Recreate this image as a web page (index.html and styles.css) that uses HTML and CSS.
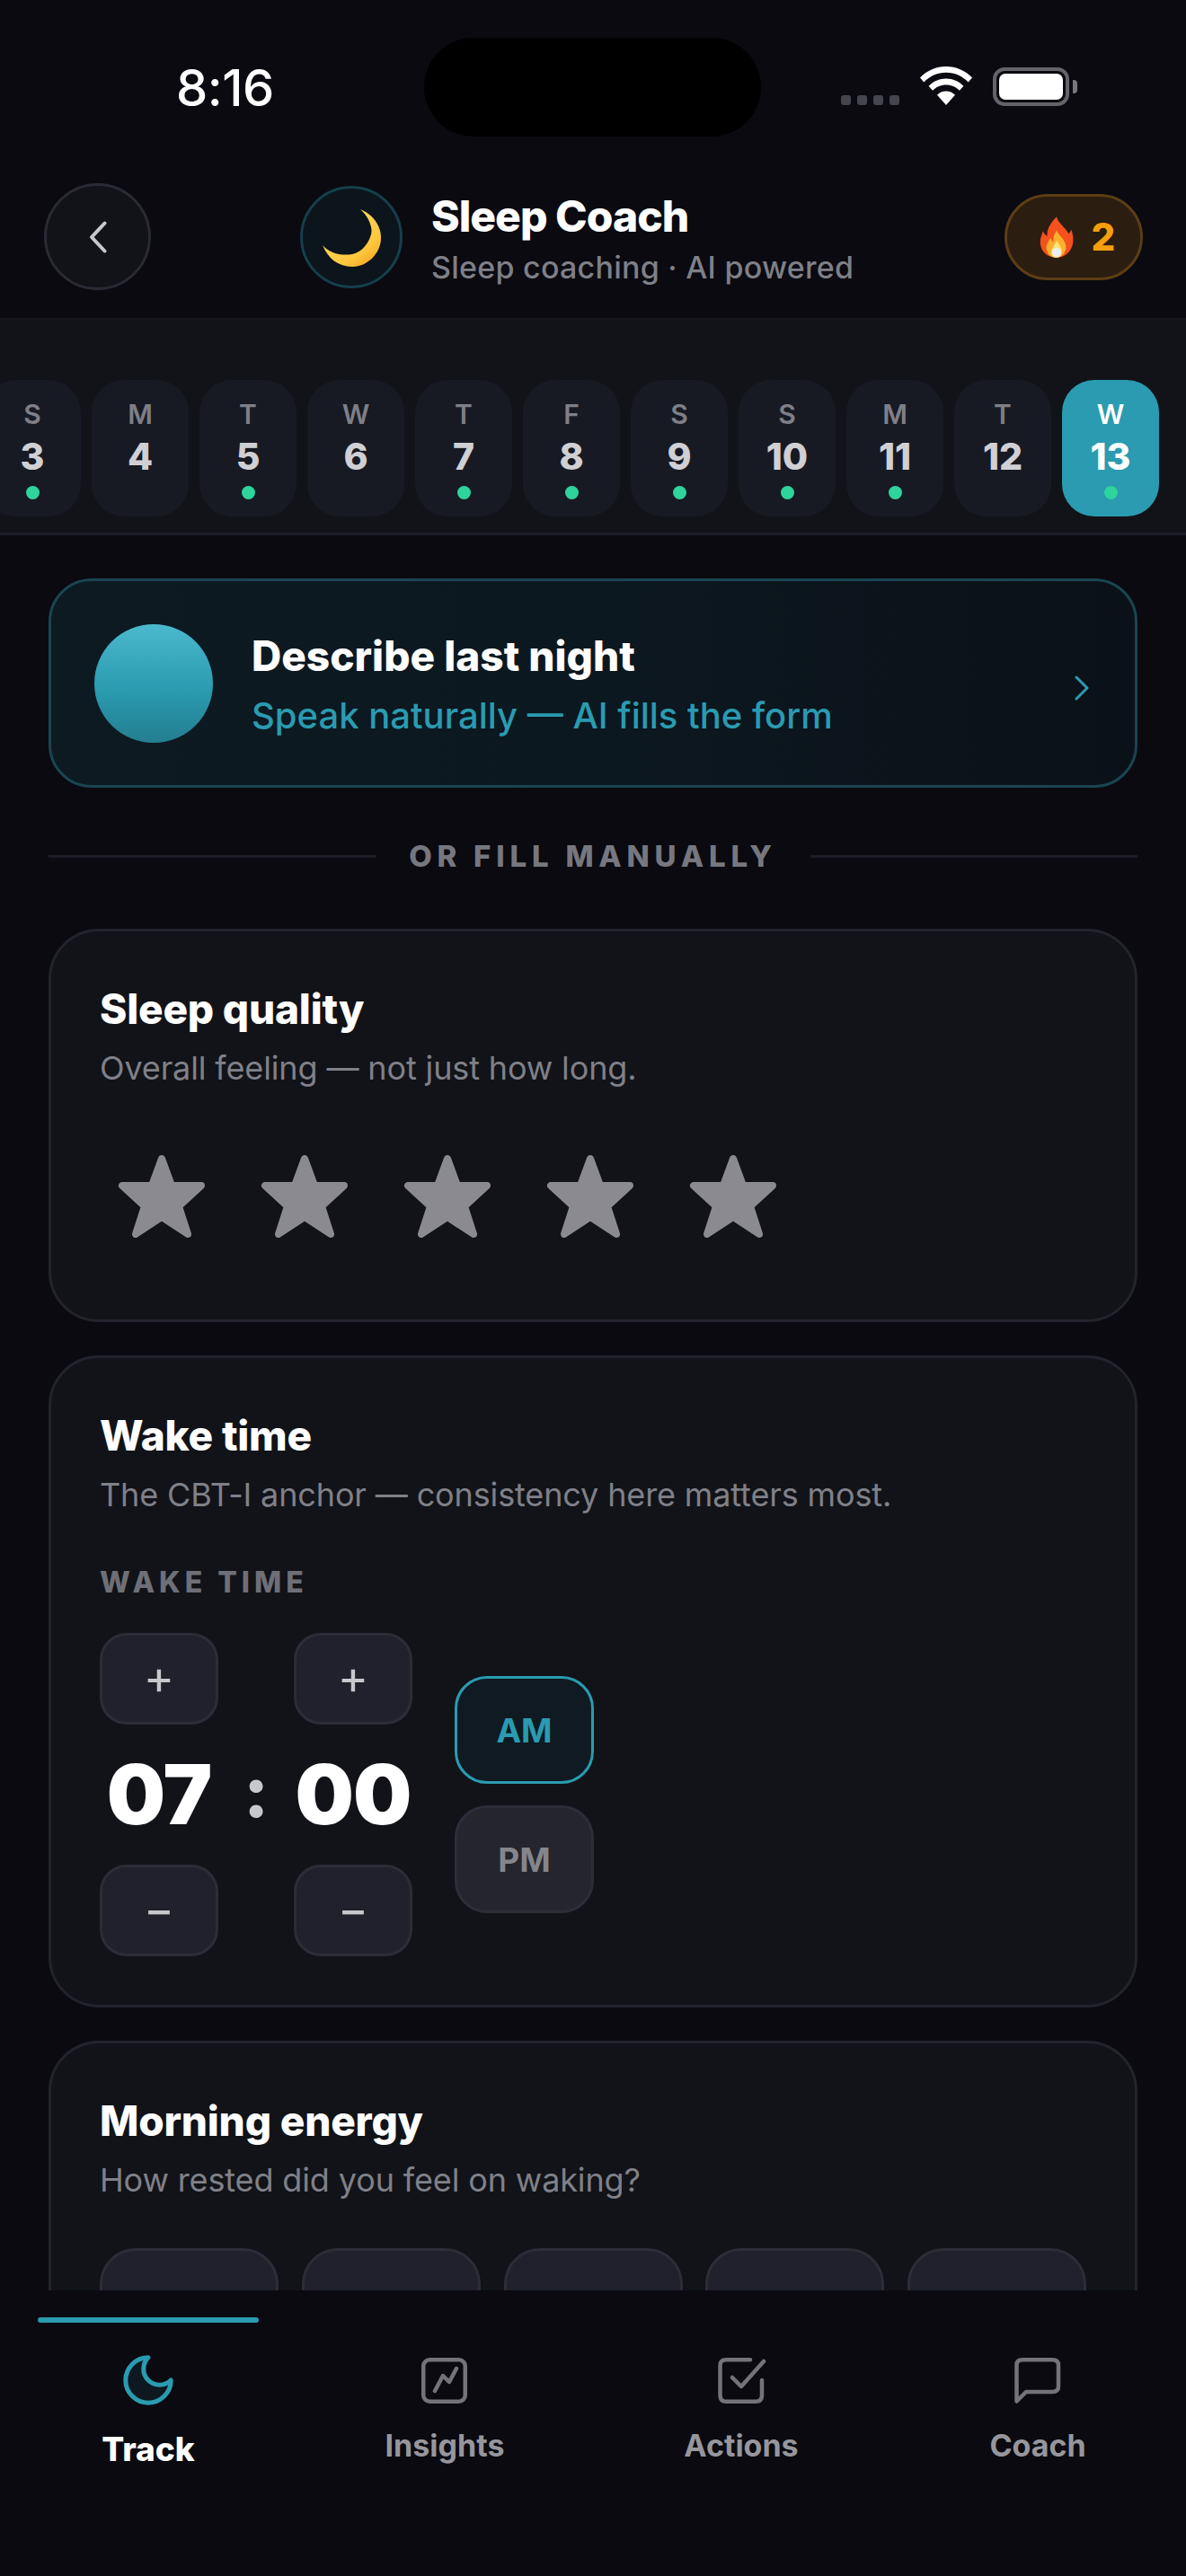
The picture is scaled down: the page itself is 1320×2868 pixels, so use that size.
FILE: index.html
```html
<!DOCTYPE html>
<html lang="en">
<head>
<meta charset="utf-8">
<title>Sleep Coach</title>
<link rel="stylesheet" href="styles.css">
</head>
<body>
<div class="screen">
  <div class="status">
    <span class="clock">8:16</span>
    <div class="island"></div>
    <div class="status-icons">
      <div class="signal"><i></i><i></i><i></i><i></i></div>
      <svg class="wifi" width="58" height="43" viewBox="0 0 58 43"><path fill="#fff" d="M29 0C18 0 8 4.300 0 12.500L4.300 17.500C11 10.500 19.500 6.700 29 6.700S47 10.500 53.700 17.500L58 12.500C50 4.300 40 0 29 0Z"/><path fill="#fff" d="M29 13.500C21.500 13.500 14.700 16.500 9.600 21.800L14 26.800C17.800 22.800 23 20.400 29 20.400S40.200 22.800 44 26.800L48.400 21.800C43.300 16.500 36.500 13.500 29 13.500Z"/><path fill="#fff" d="M29 27.500C25 27.500 21.600 29 19 31.700L29 43L39 31.700C36.400 29 33 27.500 29 27.500Z"/></svg>
      <div class="battery"><div class="battery-fill"></div></div>
    </div>
  </div>

  <header class="top">
    <button class="back"><svg width="20" height="36" viewBox="0 0 20 36"><path d="M17.500 2.500 3 18l14.500 15.500" fill="none" stroke="#c8c8cc" stroke-width="4" stroke-linecap="round" stroke-linejoin="round"/></svg></button>
    <div class="brand">
      <div class="avatar"><svg width="65" height="65" viewBox="0 0 65 65"><defs><linearGradient id="moon" x1="0.2" y1="0.2" x2="0.8" y2="1"><stop offset="0" stop-color="#ffd95e"/><stop offset="0.7" stop-color="#fdc73e"/><stop offset="1" stop-color="#f6a623"/></linearGradient></defs><path fill="url(#moon)" d="M42 1C52 10 56 22 54 29 50 43 40 50 33 51 20 53 8 50 0 41 6 56 18 65 33 65 50 65 65 50 65 33 65 18 55 6 42 1Z"/></svg></div>
      <div class="brand-text">
        <div class="brand-title">Sleep Coach</div>
        <div class="brand-sub">Sleep coaching · AI powered</div>
      </div>
    </div>
    <div class="streak">
      <svg class="flame" width="38" height="48" viewBox="0 0 40 48"><path fill="#f4511e" d="M20 0C22 8 30 12 34 20 37 17 37 15 37 15 40 22 40 30 38 35 35 43 28 48 20 48 10 48 2 42 1 32 0 26 3 21 4 17 5 20 7 22 9 23 8 15 13 7 20 0Z"/><path fill="#fbb02d" d="M20 16C22 22 30 26 31 35 31 42 26 48 20 48 13 48 8 43 8 36 9 30 11 28 13 25 14 28 15 29 16 30 16 25 17 20 20 16Z"/><path fill="#ffe27a" d="M20 28C22 32 26 35 26 40 26 45 23 48 20 48 16 48 13 45 14 40 15 36 18 33 20 28Z"/><circle cx="20" cy="42" r="5.500" fill="#eceff1"/></svg>
      <span class="streak-num">2</span>
    </div>
  </header>

  <div class="strip">
    <div class="day"><span class="dow">S</span><span class="num">3</span><i class="dot"></i></div>
    <div class="day"><span class="dow">M</span><span class="num">4</span></div>
    <div class="day"><span class="dow">T</span><span class="num">5</span><i class="dot"></i></div>
    <div class="day"><span class="dow">W</span><span class="num">6</span></div>
    <div class="day"><span class="dow">T</span><span class="num">7</span><i class="dot"></i></div>
    <div class="day"><span class="dow">F</span><span class="num">8</span><i class="dot"></i></div>
    <div class="day"><span class="dow">S</span><span class="num">9</span><i class="dot"></i></div>
    <div class="day"><span class="dow">S</span><span class="num">10</span><i class="dot"></i></div>
    <div class="day"><span class="dow">M</span><span class="num">11</span><i class="dot"></i></div>
    <div class="day"><span class="dow">T</span><span class="num">12</span></div>
    <div class="day active"><span class="dow">W</span><span class="num">13</span><i class="dot"></i></div>
  </div>

  <main class="content">
    <section class="voice">
      <div class="orb"></div>
      <div class="voice-text">
        <div class="voice-title">Describe last night</div>
        <div class="voice-sub">Speak naturally — AI fills the form</div>
      </div>
      <svg class="voice-chev" width="18" height="28" viewBox="0 0 18 28"><path d="M3 2l12 12L3 26" fill="none" stroke="#2a9bb0" stroke-width="3" stroke-linecap="round" stroke-linejoin="round"/></svg>
    </section>

    <div class="divider"><span class="rule"></span><span class="divider-text">OR FILL MANUALLY</span><span class="rule"></span></div>

    <section class="card quality">
      <h2>Sleep quality</h2>
      <p>Overall feeling — not just how long.</p>
      <div class="stars">
        <svg class="star" viewBox="0 0 98 93"><polygon points="49,5 60,35 93,35 68,58 78,89 49,70 20,89 30,58 5,35 38,35"/></svg>
        <svg class="star" viewBox="0 0 98 93"><polygon points="49,5 60,35 93,35 68,58 78,89 49,70 20,89 30,58 5,35 38,35"/></svg>
        <svg class="star" viewBox="0 0 98 93"><polygon points="49,5 60,35 93,35 68,58 78,89 49,70 20,89 30,58 5,35 38,35"/></svg>
        <svg class="star" viewBox="0 0 98 93"><polygon points="49,5 60,35 93,35 68,58 78,89 49,70 20,89 30,58 5,35 38,35"/></svg>
        <svg class="star" viewBox="0 0 98 93"><polygon points="49,5 60,35 93,35 68,58 78,89 49,70 20,89 30,58 5,35 38,35"/></svg>
      </div>
    </section>

    <section class="card wake">
      <h2>Wake time</h2>
      <p>The CBT-I anchor — consistency here matters most.</p>
      <div class="label">WAKE TIME</div>
      <div class="time-row">
        <div class="stepper">
          <button class="step">+</button>
          <div class="digits">07</div>
          <button class="step">−</button>
        </div>
        <div class="colon">:</div>
        <div class="stepper">
          <button class="step">+</button>
          <div class="digits">00</div>
          <button class="step">−</button>
        </div>
        <div class="ampm">
          <button class="mer on">AM</button>
          <button class="mer">PM</button>
        </div>
      </div>
    </section>

    <section class="card morning">
      <h2>Morning energy</h2>
      <p>How rested did you feel on waking?</p>
      <div class="chips"><div class="chip"></div><div class="chip"></div><div class="chip"></div><div class="chip"></div><div class="chip"></div></div>
    </section>
  </main>

  <nav class="tabs">
    <div class="tab tab-on">
      <span class="tab-bar"></span>
      <svg class="tab-icon" width="56" height="56" viewBox="2 2 20 20"><path d="M12 3a6 6 0 0 0 9 9 9 9 0 1 1-9-9Z" fill="#0d1820" stroke="#2a9bb0" stroke-width="1.800" stroke-linejoin="round"/></svg>
      <span class="tab-label">Track</span>
    </div>
    <div class="tab">
      <svg class="tab-icon" width="56" height="56" viewBox="0 0 56 56"><rect x="4.250" y="5.250" width="46.500" height="46.500" rx="7" fill="none" stroke="#737379" stroke-width="4.500"/><path d="M17 40l9-17 7 7 8-15" fill="none" stroke="#737379" stroke-width="4.500" stroke-linecap="round" stroke-linejoin="round"/></svg>
      <span class="tab-label">Insights</span>
    </div>
    <div class="tab">
      <svg class="tab-icon" width="56" height="56" viewBox="0 0 56 56"><path d="M38 5.250H11Q4.500 5.250 4.500 11.700V45Q4.500 51.700 11 51.700H44Q51 51.700 51 45V28" fill="none" stroke="#737379" stroke-width="4.500" stroke-linecap="round"/><path d="M18 25l10 10L53 7" fill="none" stroke="#737379" stroke-width="4.500" stroke-linecap="round" stroke-linejoin="round"/></svg>
      <span class="tab-label">Actions</span>
    </div>
    <div class="tab">
      <svg class="tab-icon" width="56" height="56" viewBox="0 0 56 56"><path d="M4.500 51.500V11Q4.500 5.250 11 5.250H44Q51 5.250 51 11V35Q51 41 44 41H15Z" fill="none" stroke="#737379" stroke-width="4.500" stroke-linejoin="round"/></svg>
      <span class="tab-label">Coach</span>
    </div>
  </nav>
</div>
</body>
</html>
```

FILE: styles.css
```css
* { box-sizing: border-box; margin: 0; padding: 0; }
html, body { background: #0a0a10; }
body { font-family: Inter, "Liberation Sans", sans-serif; color: #fff; }
button { font-family: inherit; background: none; border: 0; color: inherit; }
i { display: block; }

.screen { width: 1320px; height: 2868px; display: flex; flex-direction: column; overflow: hidden; position: relative; background: #0a0a10; }

.status { height: 204px; flex: none; position: relative; display: flex; justify-content: space-between; padding: 0 130px 0 196px; }
.clock { font-size: 56px; font-weight: 500; line-height: 66px; margin-top: 65px; letter-spacing: -0.5px; }
.island { position: absolute; left: 472px; top: 42px; width: 375px; height: 110px; border-radius: 55px; background: #000; }
.status-icons { display: flex; align-items: flex-end; height: 118px; }
.signal { display: flex; gap: 7px; margin-right: 23px; margin-bottom: 1px; }
.signal i { width: 11px; height: 11px; border-radius: 3px; background: #45454d; }
.wifi { display: block; margin-right: 23px; margin-bottom: 1px; }
.battery { width: 85px; height: 43px; border: 4px solid #636369; border-radius: 13px; padding: 3px; position: relative; }
.battery::after { content: ""; position: absolute; right: -13px; top: 10px; width: 5px; height: 15px; border-radius: 0 4px 4px 0; background: #77777d; }
.battery-fill { width: 100%; height: 100%; background: #fff; border-radius: 7px; }

.top { height: 150px; flex: none; position: relative; display: flex; align-items: flex-start; justify-content: space-between; padding: 0 48px 0 49px; }
.back { width: 119px; height: 119px; border-radius: 50%; background: #111318; border: 3px solid #2a2a35; display: flex; align-items: center; justify-content: center; flex: none; }
.brand { display: flex; align-items: center; gap: 32px; margin-top: 3px; margin-left: 166px; flex: 1; }
.avatar { width: 114px; height: 114px; border-radius: 50%; background: #0c141c; border: 3px solid #163f4c; display: flex; align-items: center; justify-content: center; flex: none; }
.brand-text { display: flex; flex-direction: column; gap: 8px; margin-top: 2px; }
.brand-title { font-size: 48px; font-weight: 800; line-height: 58px; letter-spacing: -1px; }
.brand-sub { font-size: 34px; font-weight: 500; line-height: 40px; color: #7f7f87; letter-spacing: 0.25px; }
.streak { width: 154px; height: 96px; border-radius: 48px; background: #2b1d10; border: 3px solid #5c3d14; margin-top: 12px; display: flex; align-items: center; justify-content: center; gap: 20px; padding-left: 8px; flex: none; }
.flame { display: block; }
.streak-num { font-size: 42px; font-weight: 800; color: #f59e0b; line-height: 1; }

.strip { height: 242px; flex: none; background: #111318; border-top: 3px solid #14161b; border-bottom: 3px solid #1c1c28; display: flex; gap: 12px; padding: 66px 30px 0 0; overflow: hidden; justify-content: flex-end; }
.day { width: 108px; height: 152px; flex: none; border-radius: 36px; background: #181a23; display: flex; flex-direction: column; align-items: center; padding-top: 21px; }
.dow { font-size: 30px; font-weight: 600; line-height: 34px; color: #7f7f87; }
.num { font-size: 41px; font-weight: 800; line-height: 48px; color: #d0d0d4; margin-top: 6px; }
.dot { width: 15px; height: 15px; border-radius: 50%; background: #2fd39c; margin-top: 9px; }
.day.active { background: #2a9bb0; }
.day.active .dow, .day.active .num { color: #fff; }

.content { padding: 48px 54px 0 54px; flex: 1; min-height: 0; overflow: hidden; display: flex; flex-direction: column; }
.voice { flex: none; height: 233px; border-radius: 48px; border: 3px solid #1a4552; background: linear-gradient(90deg, #0d1a22, #0c1820 50%, #0b1118); display: flex; align-items: center; padding: 0 50px 0 48px; }
.orb { width: 132px; height: 132px; border-radius: 50%; background: linear-gradient(180deg, #4bb9cd, #2a9bb0 55%, #247e90); flex: none; }
.voice-text { margin-left: 43px; flex: 1; display: flex; flex-direction: column; gap: 16px; }
.voice-title { font-size: 46px; font-weight: 800; line-height: 56px; }
.voice-sub { font-size: 40px; font-weight: 500; line-height: 46px; color: #2a9bb0; }
.voice-chev { margin-top: 10px; flex: none; }

.divider { flex: none; height: 30px; margin-top: 61px; display: flex; align-items: center; justify-content: space-between; }
.rule { width: 364px; height: 3px; background: #1a1c26; }
.divider-text { font-size: 33px; font-weight: 800; letter-spacing: 5.8px; color: #77777f; white-space: nowrap; }

.card { flex: none; border: 3px solid #22232d; border-radius: 56px; background: #111318; padding: 59px 54px 0; margin-top: 37px; }
.quality { margin-top: 66px; height: 438px; }
.card h2 { font-size: 46px; font-weight: 800; line-height: 54px; letter-spacing: -0.2px; }
.card p { font-size: 36px; font-weight: 400; line-height: 44px; color: #808088; margin-top: 17px; letter-spacing: -0.13px; }

.stars { display: flex; gap: 61px; padding-left: 20px; margin-top: 74px; }
.star { width: 98px; height: 93px; display: block; fill: #8a8a90; stroke: #8a8a90; stroke-width: 8; stroke-linejoin: round; }

.wake { height: 726px; }
.label { font-size: 32px; font-weight: 800; letter-spacing: 5px; color: #6f6f77; line-height: 40px; margin-top: 56px; }
.time-row { display: flex; align-items: center; margin-top: 36px; }
.stepper { display: flex; flex-direction: column; align-items: center; width: 132px; }
.step { width: 132px; height: 102px; border-radius: 30px; background: #20212c; border: 3px solid #2c2d38; font-size: 52px; font-weight: 400; color: #c8c8cc; line-height: 1; display: flex; align-items: center; justify-content: center; padding-bottom: 3px; }
.digits { font-size: 92px; font-weight: 900; line-height: 156px; height: 156px; letter-spacing: -1px; }
.colon { width: 84px; text-align: center; font-size: 80px; font-weight: 800; color: #c8c8cc; line-height: 1; padding-bottom: 8px; }
.ampm { margin-left: 47px; display: flex; flex-direction: column; gap: 24px; }
.mer { width: 155px; height: 120px; border-radius: 36px; background: #25262d; border: 3px solid #2c2d38; font-size: 37px; font-weight: 700; color: #85858c; }
.mer.on { background: #0f1a22; border-color: #2a9bb0; color: #2a9bb0; }

.morning { height: 420px; }
.chips { display: flex; justify-content: space-between; margin-top: 54px; }
.chip { width: 199px; height: 120px; border-radius: 40px; background: #20212c; border: 3px solid #2c2d38; }

.tabs { position: absolute; left: 0; right: 0; bottom: 0; height: 318px; background: #0a0a10; display: grid; grid-template-columns: repeat(4, 330px); }
.tab { position: relative; display: flex; flex-direction: column; align-items: center; padding-top: 72px; }
.tab-bar { position: absolute; left: 42px; top: 30px; width: 246px; height: 6px; border-radius: 3px; background: #2a9bb0; }
.tab-icon { display: block; }
.tab-label { font-size: 34px; font-weight: 700; color: #96969c; line-height: 42px; margin-top: 24px; }
.tab-on .tab-label { color: #fff; margin-top: 28px; font-size: 37px; font-weight: 800; line-height: 42px; }
```
